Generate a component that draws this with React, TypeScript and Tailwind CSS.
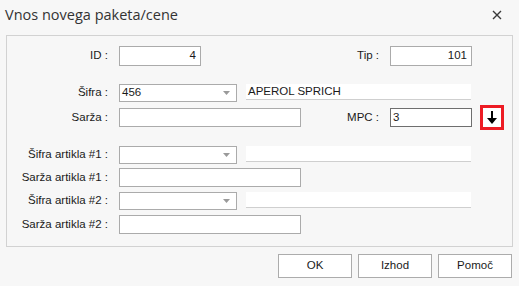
import React from 'react';

const font = { fontFamily: '"Liberation Sans", Arial, sans-serif' };

function Label({ text, w }: { text: string; w: string }) {
  return <div className={`${w} shrink-0 text-right text-[11.5px] text-[#1a1a1a] pr-[11px]`}>{text}</div>;
}

function TextBox({ value, w, right, dark }: { value?: string; w: string; right?: boolean; dark?: boolean }) {
  return (
    <div
      className={`${w} h-full shrink-0 bg-white border ${dark ? 'border-[#6e6e6e]' : 'border-[#ababab]'} flex items-center px-[2px] text-[11.5px] text-[#1a1a1a] ${right ? 'justify-end pr-[4px]' : ''}`}
    >
      {value}
    </div>
  );
}

function Combo({ value }: { value?: string }) {
  return (
    <div className="w-[118px] h-full shrink-0 bg-white border border-[#ababab] flex items-center justify-between pl-[2px] pr-[6px] text-[11.5px] text-[#1a1a1a]">
      <span>{value}</span>
      <svg width="7" height="4" viewBox="0 0 7 4">
        <path d="M0 0 H7 L3.5 4 Z" fill="#9a9a9a" />
      </svg>
    </div>
  );
}

function Desc({ value }: { value?: string }) {
  return (
    <div className="ml-[9px] w-[225px] h-[16px] self-start bg-white border-b border-[#cfcfcf] flex items-center px-[2px] text-[11.5px] text-[#1a1a1a]">
      {value}
    </div>
  );
}

export default function App() {
  return (
    <div className="w-[519px] h-[286px] bg-[#f7f7f7] flex flex-col" style={font}>
      {/* naslov */}
      <div className="h-[35px] flex items-center justify-between pl-[5px] pr-[17px]">
        <span className="text-[14.5px] text-[#333] -mt-[5px]" style={{ fontFamily: '"Open Sans", "Noto Sans", sans-serif' }}>
          Vnos novega paketa/cene
        </span>
        <svg width="10" height="10" viewBox="0 0 10 10" className="-mt-[5px]">
          <path d="M1 1 L9 9 M9 1 L1 9" stroke="#3a3a3a" strokeWidth="1.4" />
        </svg>
      </div>

      {/* okvir */}
      <div className="ml-[6px] w-[507px] h-[212px] border border-[#d2d2d2] flex flex-col pt-[10px]">
        <div className="flex items-center h-[20px]">
          <Label text="ID :" w="w-[112px]" />
          <TextBox value="4" w="w-[82px]" right />
          <Label text="Tip :" w="w-[189px]" />
          <TextBox value="101" w="w-[82px]" right />
        </div>

        <div className="flex items-center h-[18px] mt-[18px]">
          <Label text="Šifra :" w="w-[112px]" />
          <Combo value="456" />
          <Desc value="APEROL SPRICH" />
        </div>

        <div className="flex items-center h-[19px] mt-[6px]">
          <Label text="Sarža :" w="w-[112px]" />
          <TextBox w="w-[182px]" />
          <Label text="MPC :" w="w-[89px]" />
          <TextBox value="3" w="w-[82px]" dark />
          <button className="ml-[8px] w-[24px] h-[25px] shrink-0 bg-white border-[3px] border-[#ed1c24] flex items-center justify-center">
            <svg width="10" height="14" viewBox="0 0 10 14">
              <path d="M4 0 H6 V8 H4 Z" fill="#000" />
              <path d="M0 7 H10 L5 13 Z" fill="#000" />
            </svg>
          </button>
        </div>

        <div className="flex items-center h-[18px] mt-[19px]">
          <Label text="Šifra artikla #1 :" w="w-[112px]" />
          <Combo />
          <Desc />
        </div>

        <div className="flex items-center h-[19px] mt-[4px]">
          <Label text="Sarža artikla #1 :" w="w-[112px]" />
          <TextBox w="w-[182px]" />
        </div>

        <div className="flex items-center h-[18px] mt-[5px]">
          <Label text="Šifra artikla #2 :" w="w-[112px]" />
          <Combo />
          <Desc />
        </div>

        <div className="flex items-center h-[19px] mt-[5px]">
          <Label text="Sarža artikla #2 :" w="w-[112px]" />
          <TextBox w="w-[182px]" />
        </div>
      </div>

      {/* gumbi */}
      <div className="flex justify-end gap-[6px] pr-[7px] mt-[7px]">
        {['OK', 'Izhod', 'Pomoč'].map((b) => (
          <button
            key={b}
            className="w-[74px] h-[24px] bg-white border-[1.5px] border-[#acacac] text-[11.5px] text-[#1a1a1a]"
          >
            {b}
          </button>
        ))}
      </div>
    </div>
  );
}
